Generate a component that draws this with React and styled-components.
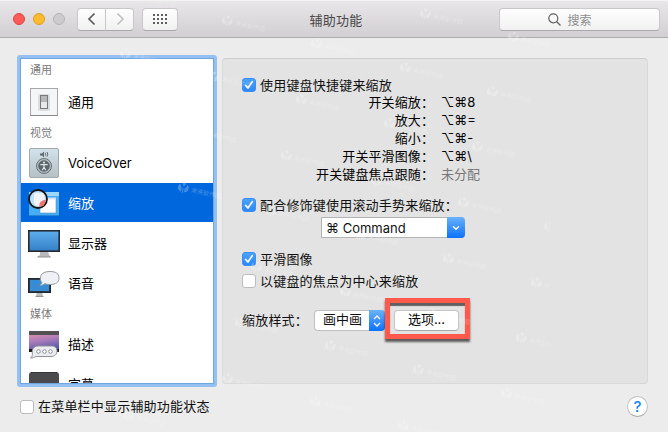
import React from "react";
import styled, { createGlobalStyle, css } from "styled-components";

const GlobalStyle = createGlobalStyle`
    *,
    *::after {
        box-sizing: border-box;
    }

    body {
        margin: 0;
        overflow: hidden;
        font-family: Inter, "Noto Sans CJK SC", sans-serif;
        font-size: 13px;
        color: #111;
    }
`;

const Window = styled.div`
    position: relative;
    display: flex;
    flex-direction: column;
    width: 668px;
    height: 432px;
    background-color: #ececec;
    overflow: hidden;
    white-space: nowrap;
`;

const TitleBar = styled.header`
    display: grid;
    grid-template-columns: 1fr auto 1fr;
    align-items: center;
    height: 38px;
    flex: none;
    padding: 0 8px 0 13px;
    border-top: 1px solid #f4f3f4;
    border-bottom: 1px solid #aeacae;
    background: linear-gradient(#e8e6e8, #d1cfd1);
`;

const Controls = styled.div`
    display: flex;
    align-items: center;
`;

const Light = styled.span`
    width: 12px;
    height: 12px;
    margin-right: 8px;
    border-radius: 50%;
    border: 1px solid ${({ $edge }) => $edge};
    background-color: ${({ $color }) => $color};
`;

const barControl = css`
    display: flex;
    align-items: center;
    justify-content: center;
    height: 23px;
    border: 1px solid #c9c7c9;
    border-bottom-color: #aaa8aa;
    background: linear-gradient(#fefefe, #f1f1f1);
`;

const BarButton = styled.button`
    ${barControl}
    width: ${({ $width }) => $width}px;
    margin-left: ${({ $gap = 0 }) => $gap}px;
    padding: 0;
    border-radius: ${({ $corners = "4px" }) => $corners};
`;

const Title = styled.h1`
    margin: 0;
    padding: 1px 1px 0 0;
    font-size: 13px;
    font-weight: 400;
    letter-spacing: 0.3px;
    color: #4a484a;
`;

const Search = styled.div`
    ${barControl}
    justify-self: end;
    width: 161px;
    gap: 6px;
    padding-right: 19px;
    border-radius: 4px;
    font-size: 12px;
    color: #8d8b8d;
`;

const Main = styled.main`
    display: flex;
    gap: 5px;
    height: 332px;
    margin: 17px 20px 0 17px;
`;

const Sidebar = styled.nav`
    width: 200px;
    height: 332px;
    flex: none;
    border: 3px solid #94c0f2;
    border-radius: 3px;
    background-color: #94c0f2;
`;

const List = styled.div`
    height: 326px;
    border: 1px solid #6ea5e2;
    background-color: #fff;
    overflow: hidden;
`;

const Group = styled.h2`
    display: flex;
    align-items: center;
    height: ${({ $first }) => ($first ? 23 : 21)}px;
    margin: 0;
    padding: 0 0 ${({ $first }) => ($first ? 3 : 1)}px 9px;
    font-size: 11px;
    font-weight: 400;
    color: #7a7a7a;
`;

const Item = styled.div`
    display: flex;
    align-items: center;
    height: 40px;
    padding-left: 7px;
    gap: 8px;
    color: ${({ $active }) => ($active ? "#fff" : "#000")};
    background: ${({ $active }) =>
        $active ? "linear-gradient(#0068dc 39px, #fff 39px)" : "none"};

    svg {
        flex: none;
    }
`;

const Name = styled.span`
    padding-bottom: ${({ $latin }) => ($latin ? 0 : 2)}px;
`;

const Panel = styled.section`
    width: 426px;
    height: 326px;
    margin-top: 3px;
    padding: 17px 0 0 19px;
    border: 1px solid #d8d8d8;
    border-top-color: #cdcdcd;
    border-radius: 4px;
    background-color: #e3e3e3;
`;

const Option = styled.label`
    display: flex;
    align-items: center;
    gap: 4px;
    height: 18px;
    margin-bottom: ${({ $after = 0 }) => $after}px;
    letter-spacing: 0.2px;
`;

const Caption = styled.span`
    padding-bottom: 2px;
`;

const Box = styled.span`
    display: flex;
    align-items: center;
    justify-content: center;
    width: 14px;
    height: 14px;
    flex: none;
    border: 1px solid ${({ $on }) => ($on ? "#3a8ff5" : "#bcbcbc")};
    border-radius: 3px;
    background: ${({ $on }) =>
        $on ? "linear-gradient(#4aa3fb, #2e87f8)" : "#fff"};
`;

const Shortcuts = styled.dl`
    display: grid;
    grid-template-columns: 192px auto;
    grid-auto-rows: 18px;
    align-items: center;
    column-gap: 7px;
    margin: -1px 0 13px;
    color: #000;

    dt {
        padding-bottom: 2px;
        text-align: right;
        letter-spacing: 0.1px;
    }
`;

const Keys = styled.dd`
    margin: 0;
    padding-bottom: ${({ $muted }) => ($muted ? 2 : 0)}px;
    font-family: Inter, "DejaVu Sans", "Noto Sans CJK SC", sans-serif;
    color: ${({ $muted }) => ($muted ? "#777" : "#000")};
`;

const ComboBox = styled.div`
    display: flex;
    width: 144px;
    height: 21px;
    margin: 3px 0 12px 79px;
    border: 1px solid #b4b4b4;
    border-right: 0;
    border-radius: 0 4px 4px 0;
    background-color: #fff;
`;

const ComboText = styled.span`
    flex: 1;
    padding-left: 4px;
    line-height: 20px;
    font-family: Inter, "DejaVu Sans", sans-serif;
`;

const BlueEnd = styled.span`
    display: flex;
    align-items: center;
    justify-content: center;
    width: ${({ $width }) => $width}px;
    height: 21px;
    margin-top: -1px;
    border-radius: 0 4px 4px 0;
    background: linear-gradient(#6bb2fa, #0b72fb);
`;

const StyleRow = styled.div`
    display: flex;
    align-items: center;
    height: 21px;
    margin-top: 20px;
`;

const StyleLabel = styled.span`
    width: 72px;
    padding-bottom: 2px;
    letter-spacing: 0.2px;
`;

const PopUp = styled.div`
    display: flex;
    width: 71px;
    height: 21px;
    border: 1px solid #c0c0c0;
    border-right: 0;
    border-radius: 4px;
    background-color: #fff;
`;

const PopUpText = styled.span`
    flex: 1;
    padding-left: 8px;
    line-height: 17px;
`;

const Highlight = styled.div`
    position: relative;
    margin-left: 9px;

    &::after {
        content: "";
        position: absolute;
        left: -9px;
        top: -12px;
        width: 85px;
        height: 41px;
        border: 5px solid #fe5a4b;
        box-shadow: 0 3px 2px rgba(0, 0, 0, 0.6),
            inset 0 3px 1px rgba(0, 0, 0, 0.58);
    }
`;

const PushButton = styled.button`
    display: block;
    width: 65px;
    height: 21px;
    padding: 0 0 2px;
    border: 1px solid #c4c4c4;
    border-bottom-color: #a8a8a8;
    border-radius: 4px;
    background-color: #fff;
    font: inherit;
    line-height: 17px;
    color: #000;
`;

const Footer = styled.footer`
    display: flex;
    align-items: center;
    justify-content: space-between;
    margin: 9px 20px 0;
`;

const Help = styled.button`
    width: 21px;
    height: 21px;
    padding: 0;
    border: 1px solid #c2c2c2;
    border-bottom-color: #a9a9a9;
    border-radius: 50%;
    background-color: #fff;
    font: 500 15px/18px Inter, sans-serif;
    color: #1680f8;
`;

const Marks = styled.div`
    position: absolute;
    top: 0;
    left: 0;
    width: 550px;
    height: 432px;
    overflow: hidden;
    pointer-events: none;
`;

const Mark = styled.div`
    position: absolute;
    display: flex;
    align-items: center;
    gap: 3px;
    left: ${({ $x }) => $x - 5}px;
    top: ${({ $y }) => $y - 6}px;
    height: 12px;
    transform: rotate(13deg);
    transform-origin: 5px 6px;
    font-size: 6px;
    color: #fff;
    opacity: 0.26;
`;

const MARKS = [
    [138, -5], [227, 20], [316, 43], [425, 13], [513, 36], [125, 53],
    [213, 76], [301, 99], [405, 67], [492, 91], [110, 108], [198, 131],
    [286, 155], [389, 123], [477, 146], [183, 187], [271, 210], [376, 180],
    [463, 202], [549, 226], [168, 242], [256, 266], [360, 234], [448, 258],
    [536, 282], [153, 298], [240, 322], [345, 291], [432, 313], [521, 337],
    [138, 354], [227, 378], [330, 345], [418, 369], [506, 393], [128, 415],
    [315, 401], [403, 425],
];

function Tick() {
    return (
        <svg width="12" height="12" viewBox="0 0 12 12" fill="none">
            <path d="M2.6 6.4 5 9 9.3 2.6" stroke="#fff" strokeWidth="1.7" strokeLinecap="round" />
        </svg>
    );
}

function Check({ on, after, children }) {
    return (
        <Option $after={after}>
            <Box $on={on}>{on && <Tick />}</Box>
            <Caption>{children}</Caption>
        </Option>
    );
}

function SwitchIcon() {
    return (
        <svg width="32" height="32" viewBox="0 0 32 32">
            <rect x="2.5" y="2.5" width="27" height="27" fill="#f5f6f8" stroke="#a5a7aa" />
            <path d="M2 29.5h28" stroke="#87898b" />
            <rect x="10" y="8" width="12" height="17" rx="2" fill="#dcdddf" />
            <rect x="12.5" y="9.5" width="7" height="13" fill="#e9e9ea" stroke="#77797b" />
            <path d="M13 10h6v6h-6z" fill="#b6b7b9" />
        </svg>
    );
}

function VoiceOverIcon() {
    return (
        <svg width="32" height="32" viewBox="0 0 32 32">
            <defs>
                <linearGradient id="vo" x2="0" y2="1">
                    <stop stopColor="#d2e3ec" />
                    <stop offset="1" stopColor="#b5c1c4" />
                </linearGradient>
            </defs>
            <rect x="1.5" y="1.5" width="29" height="29" rx="1.5" fill="url(#vo)" stroke="#a0a9ac" />
            <path d="M12 6.5h2l2-2v6l-2-2h-2z" fill="#5e686c" />
            <path d="M17.2 5.8q1 1.5 0 3M19 5q1.5 2.3 0 4.6" fill="none" stroke="#5e686c" />
            <circle cx="16" cy="19" r="7.5" fill="#b4c0c4" stroke="#667176" />
            <circle cx="16" cy="19" r="5.8" fill="#5b656a" />
            <circle cx="16" cy="15.6" r="1.1" fill="#d9e4e9" />
            <path d="M12.3 17.7h7.4M16 17v3l-1.700 3.300M16 20l1.700 3.300" fill="none" stroke="#d9e4e9" strokeWidth="1.2" />
        </svg>
    );
}

function ZoomIcon() {
    return (
        <svg width="32" height="32" viewBox="0 0 32 32">
            <rect x="1" y="5" width="30" height="24" fill="#48adf5" />
            <path d="M1 5h30v4H1z" fill="#9dd8fc" />
            <path d="M1 28.5h30" stroke="#2685d3" />
            <rect x="12" y="11" width="16" height="15" fill="#fff" stroke="#5e91b8" strokeWidth=".6" />
            <path d="M12 10.5h16v2H12z" fill="#d4e6f2" />
            <circle cx="10" cy="12" r="9" fill="#bfe2f7" stroke="#151515" strokeWidth="1.800" />
            <path d="M6 8q0-2 2-2h7q2 3 2 7l-5 6H9q-3-1-3-3z" fill="#f2f3f6" />
            <path d="M11.5 19.500q-.7-3.500 1.800-5.300t4-1.500q.6 4.500-3.300 6.600z" fill="#f07873" />
        </svg>
    );
}

function DisplayIcon() {
    return (
        <svg width="32" height="32" viewBox="0 0 32 32">
            <defs>
                <linearGradient id="screen" x2="0" y2="1">
                    <stop stopColor="#5eaeed" />
                    <stop offset="1" stopColor="#347fc6" />
                </linearGradient>
            </defs>
            <path d="M12 24h8l1 4 2 2H9l3-2z" fill="#b9b9bb" />
            <path d="M9.500 30h13" stroke="#929294" />
            <rect x=".8" y="3.8" width="30.4" height="20.4" fill="url(#screen)" stroke="#252a31" strokeWidth="1.6" />
        </svg>
    );
}

function SpeechIcon() {
    return (
        <svg width="32" height="32" viewBox="0 0 32 32">
            <path d="M9 25h5l1 4H8z" fill="#bcbcbe" />
            <path d="M7.5 29.5h8" stroke="#969698" />
            <rect x=".9" y="11.9" width="21.2" height="13.2" fill="#388bd5" stroke="#22272e" strokeWidth="1.8" />
            <path d="M22 4.500c6 0 9 2.3 9 6.500s-3 6.500-9 6.500c-2 0-3.600-.2-5-.8-1.400 1-3.200 1.600-5.200 1.600 1.200-.8 1.800-2 2-3-1-1-1.500-2.500-1.500-4 0-4.300 3.700-6.800 9.700-6.800z" fill="#eff1f4" stroke="#929aa3" />
        </svg>
    );
}

function DescriptionIcon() {
    return (
        <svg width="32" height="32" viewBox="0 0 32 32">
            <defs>
                <linearGradient id="dusk" x2=".25" y2="1">
                    <stop stopColor="#f197a4" />
                    <stop offset=".5" stopColor="#ae7db9" />
                    <stop offset="1" stopColor="#5157aa" />
                </linearGradient>
            </defs>
            <rect x="1" y="3" width="30" height="21" fill="url(#dusk)" />
            <path d="M1 3h30v4H1z" fill="#525255" />
            <path d="M1 21h30v3H1z" fill="#19191c" />
            <path d="M10 18h13c4 0 6 2 6 5s-2 5.500-6 5.500H8c-1.500 1-3.500 1.500-5.500 1.500 1-.8 1.800-2 2-3.500C3.500 22 5.500 18 10 18z" fill="#ebecf0" stroke="#8f9299" />
            <g fill="#fff" stroke="#8d9097">
                <circle cx="10.500" cy="23.500" r="1.800" />
                <circle cx="16.500" cy="23.500" r="1.800" />
                <circle cx="22.500" cy="23.500" r="1.800" />
            </g>
        </svg>
    );
}

function CaptionIcon() {
    return (
        <svg width="32" height="32" viewBox="0 0 32 32">
            <rect x="1" y="4" width="30" height="26" rx="3" fill="#4b4b4d" />
            <path d="M3 4.500h26" stroke="#353537" />
        </svg>
    );
}

function GlobeMark() {
    return (
        <svg width="11" height="11" viewBox="0 0 11 11" fill="#fff">
            <path d="M2 2c0 2 1 3 2 4v4C1 9.500 0 7.500 0 5.500 0 4 1 2.700 2 2zM9 2c0 2-1 3-2 4v4c3-.5 4-2.500 4-4.500C11 4 10 2.700 9 2zM3.500 1Q5.500 0 7.500 1L5.500 4.500zM5 6h1v5H5z" />
        </svg>
    );
}

// full-width colon
const COLON = "\uff1a";

const shortcuts = [
    ["开关缩放", "⌥⌘8"],
    ["放大", "⌥⌘="],
    ["缩小", "⌥⌘-"],
    ["开关平滑图像", "⌥⌘\\"],
    ["开关键盘焦点跟随", "未分配"],
];

function Toolbar() {
    return (
        <TitleBar>
            <Controls>
                <Light $color="#fc5b57" $edge="#e2443f" />
                <Light $color="#fdbc2e" $edge="#df9e20" />
                <Light $color="#cdcbcd" $edge="#b6b4b6" />
                <BarButton $width={29} $gap={4} $corners="4px 0 0 4px">
                    <svg width="10" height="14" fill="none" stroke="#5c5c5c" strokeWidth="1.700">
                        <path d="M7.500 1.500 2 7l5.500 5.500" />
                    </svg>
                </BarButton>
                <BarButton $width={29} $gap={-1} $corners="0 4px 4px 0">
                    <svg width="10" height="14" fill="none" stroke="#bdbdbd" strokeWidth="1.500">
                        <path d="m2.500 1.500 5.500 5.500-5.500 5.500" />
                    </svg>
                </BarButton>
                <BarButton $width={36} $gap={8}>
                    <svg width="14" height="10" fill="#5e5e5e">
                        {[0, 4, 8].map((y) =>
                            [0, 4, 8, 12].map((x) => (
                                <rect key={`${x}-${y}`} x={x} y={y} width="2" height="2" />
                            ))
                        )}
                    </svg>
                </BarButton>
            </Controls>
            <Title>辅助功能</Title>
            <Search>
                <svg width="13" height="13" fill="none" stroke="#636163" strokeWidth="1.200">
                    <circle cx="5.300" cy="5.300" r="4.500" />
                    <path d="m8.500 8.500 4 4" />
                </svg>
                搜索
            </Search>
        </TitleBar>
    );
}

function App() {
    return (
        <Window>
            <GlobalStyle />
            <Toolbar />
            <Main>
                <Sidebar>
                    <List>
                        <Group $first>通用</Group>
                        <Item><SwitchIcon /><Name>通用</Name></Item>
                        <Group>视觉</Group>
                        <Item><VoiceOverIcon /><Name $latin>VoiceOver</Name></Item>
                        <Item $active><ZoomIcon /><Name>缩放</Name></Item>
                        <Item><DisplayIcon /><Name>显示器</Name></Item>
                        <Item><SpeechIcon /><Name>语音</Name></Item>
                        <Group>媒体</Group>
                        <Item><DescriptionIcon /><Name>描述</Name></Item>
                        <Item><CaptionIcon /><Name>字幕</Name></Item>
                    </List>
                </Sidebar>
                <Panel>
                    <Check on>使用键盘快捷键来缩放</Check>
                    <Shortcuts>
                        {shortcuts.map(([label, keys]) => (
                            <React.Fragment key={label}>
                                <dt>{label + COLON}</dt>
                                <Keys $muted={keys === "未分配"}>{keys}</Keys>
                            </React.Fragment>
                        ))}
                    </Shortcuts>
                    <Check on>配合修饰键使用滚动手势来缩放{COLON}</Check>
                    <ComboBox>
                        <ComboText>⌘ Command</ComboText>
                        <BlueEnd $width={18}>
                            <svg width="8" height="6" fill="none" stroke="#fff" strokeWidth="1.500">
                                <path d="m1 1.200 3 3 3-3" />
                            </svg>
                        </BlueEnd>
                    </ComboBox>
                    <Check on after={4}>平滑图像</Check>
                    <Check>以键盘的焦点为中心来缩放</Check>
                    <StyleRow>
                        <StyleLabel>缩放样式{COLON}</StyleLabel>
                        <PopUp>
                            <PopUpText>画中画</PopUpText>
                            <BlueEnd $width={16}>
                                <svg width="8" height="12" fill="none" stroke="#fff" strokeWidth="1.400">
                                    <path d="m1 4 3-3 3 3M1 8l3 3 3-3" />
                                </svg>
                            </BlueEnd>
                        </PopUp>
                        <Highlight>
                            <PushButton>选项...</PushButton>
                        </Highlight>
                    </StyleRow>
                </Panel>
            </Main>
            <Footer>
                <Check>在菜单栏中显示辅助功能状态</Check>
                <Help>?</Help>
            </Footer>
            <Marks>
                {MARKS.map(([x, y]) => (
                    <Mark key={`${x}-${y}`} $x={x} $y={y}>
                        <GlobeMark />
                        未来软件园
                    </Mark>
                ))}
            </Marks>
        </Window>
    );
}

export default App;
